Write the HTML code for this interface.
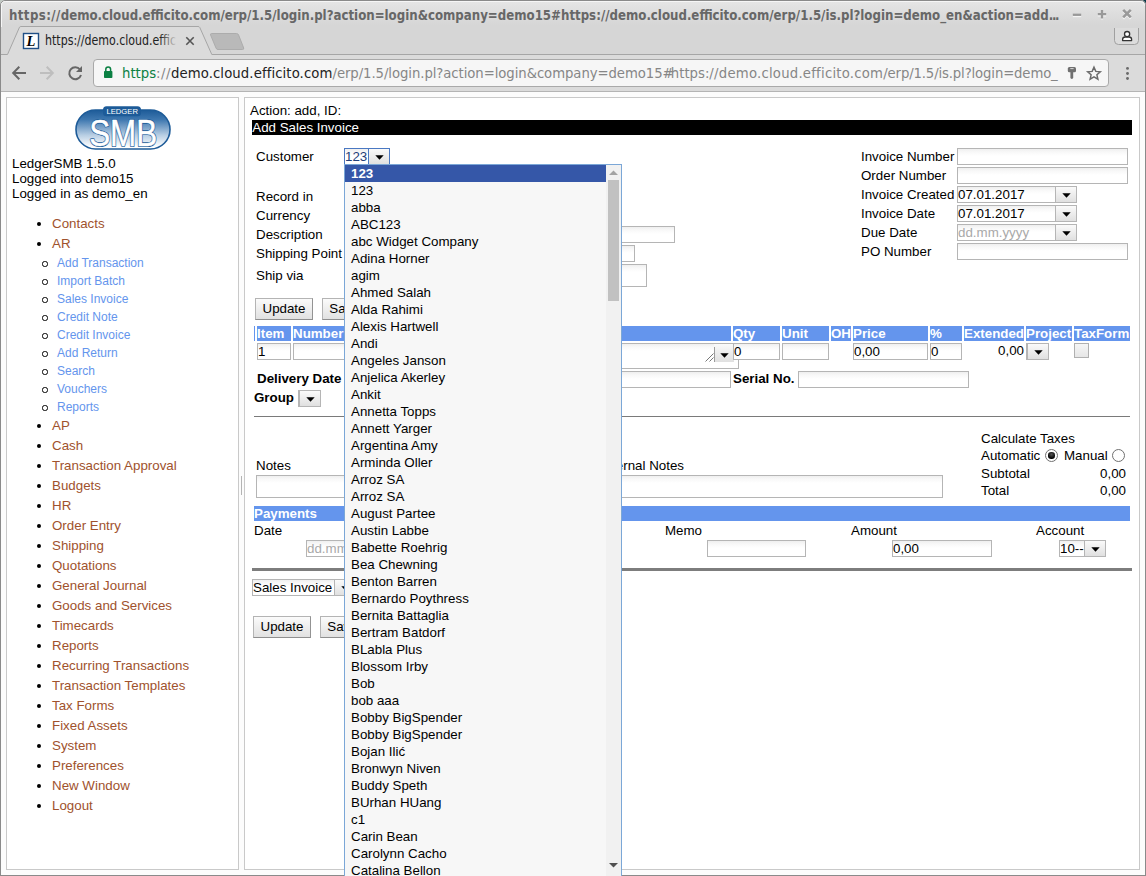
<!DOCTYPE html>
<html>
<head>
<meta charset="utf-8">
<title>LedgerSMB</title>
<style>
html,body{margin:0;padding:0;}
body{width:1146px;height:876px;position:relative;overflow:hidden;background:#fcfcfc;font-family:"Liberation Sans",sans-serif;font-size:13.33px;color:#000;}
.abs{position:absolute;}
#win{position:absolute;left:0;top:0;width:1146px;height:876px;overflow:hidden;}
/* ---------- browser chrome ---------- */
#titlebar{position:absolute;left:0;top:0;width:1146px;height:27px;background:linear-gradient(#e5e5e5 0,#e4e4e4 3px,#d6d6d6 25px);}
#title{position:absolute;left:8.5px;top:6px;transform:scaleX(0.9375);transform-origin:0 0;font-family:"DejaVu Sans Condensed","DejaVu Sans",sans-serif;font-weight:bold;font-size:14px;color:#676767;white-space:nowrap;line-height:18px;}
#tabstrip{position:absolute;left:0;top:27px;width:1146px;height:28px;background:#d6d6d6;}
#toolbar{position:absolute;left:0;top:54px;width:1146px;height:38px;background:#dbdbdb;border-bottom:1px solid #b4b4b4;box-sizing:border-box;}
#urlbox{position:absolute;left:93px;top:59px;width:1016px;height:28px;box-sizing:border-box;border:1px solid #a9a9a9;border-radius:4px;background:#f6f6f6;}
#url{position:absolute;left:122px;top:63px;font-family:"DejaVu Sans Condensed","DejaVu Sans",sans-serif;font-size:14.72px;line-height:20px;white-space:nowrap;color:#868686;}
#url .g{color:#0b8043;}
#url .d{color:#222;}
#tabtext{position:absolute;left:45.3px;top:31.6px;width:143px;transform:scaleX(0.93);transform-origin:0 0;overflow:hidden;font-family:"DejaVu Sans Condensed","DejaVu Sans",sans-serif;font-size:13.2px;line-height:18px;white-space:nowrap;color:#222;}
/* ---------- frames ---------- */
.frame{position:absolute;box-sizing:border-box;border:1px solid #c9c9c9;background:#fff;}
#left{left:6px;top:97px;width:233px;height:773px;}
#right{left:244px;top:97px;width:896px;height:773px;}
.t{position:absolute;white-space:nowrap;line-height:15px;}
.b{font-weight:bold;}

.m1{color:#a0522d;}
.m2{color:#6495ed;}
.inp{position:absolute;box-sizing:border-box;border:1px solid #b5b5b5;background:linear-gradient(#efefef 0,#f8f8f8 3px,#fff 7px);font-size:13.33px;line-height:15px;white-space:nowrap;overflow:hidden;padding-left:0;}
.inp.foc{border-color:#4a78c2;color:#233f7a;}
.inp.foc .sbtn{border-left-color:#4a78c2;}
.sel{overflow:visible;}
.sbtn{position:absolute;right:0;top:0;border-left:1px solid #b5b5b5;background:linear-gradient(#fafafa,#e0e0e0);}
.abs.sbtn{position:absolute;right:auto;}
.btn{position:absolute;box-sizing:border-box;border:1px solid;border-color:#b4b4b4 #939393 #8f8f8f #b4b4b4;border-radius:0;background:linear-gradient(#fbfbfb,#e1e1e1);font-size:13.33px;text-align:center;white-space:nowrap;overflow:hidden;}
.th{position:absolute;height:15px;line-height:15px;background:#6495ed;color:#fff;font-weight:bold;font-size:13.33px;white-space:nowrap;overflow:hidden;}
.radio{position:absolute;width:13px;height:13px;box-sizing:border-box;border:1px solid #707070;border-radius:50%;background:#fff;}
.radio i{position:absolute;left:2.3px;top:2.3px;width:6.4px;height:6.4px;border-radius:50%;background:radial-gradient(circle at 50% 35%,#555,#000 70%);}
#dd{position:absolute;left:344px;top:164px;width:278px;height:720px;box-sizing:border-box;border:1px solid #7ba7d7;background:#f7f7f7;overflow:hidden;font-size:13.33px;}
.opt{height:17px;line-height:17px;padding-left:6px;width:255px;white-space:nowrap;}
.opt.hi{background:#3557a8;color:#fff;font-weight:bold;}
#sbar{position:absolute;left:261px;top:0;width:15px;height:720px;background:#f1f1f1;}
#thumb{position:absolute;left:2px;top:15px;width:11px;height:121px;background:#c1c1c1;}
</style>
</head>
<body>
<div id="win">
<div id="titlebar"></div>
<div id="title"><span style="letter-spacing:0.42px">https://</span>demo.cloud.efficito.com/erp/1.5/login.pl?action=login&amp;company=demo15#https://demo.cloud.efficito.com/erp/1.5/is.pl?login=demo_en&amp;action=add<span style="letter-spacing:-1.4px">...</span></div>
<div id="tabstrip"></div>
<div id="toolbar"></div>
<div id="urlbox"></div>
<svg class="abs" style="left:0;top:0" width="1146" height="92" viewBox="0 0 1146 92">
<!-- active tab -->
<path d="M0 54.5 H7.5 L19.5 27.2 Q20 26.5 21 26.5 H198 Q199.3 26.5 199.8 27.5 L211.8 54.5 H1146 V56 H0 Z" fill="#dbdbdb" stroke="none"/>
<path d="M0 54.5 H7.5 L19.5 27.2 Q20 26.5 21 26.5 H198 Q199.3 26.5 199.8 27.5 L211.8 54.5 H1146" fill="none" stroke="#a6a6a6" stroke-width="1"/>
<!-- new tab button -->
<path d="M211.5 33.5 H236.5 Q238 33.5 238.6 35 L243.7 48 Q244 49.5 242.5 49.5 H218 Q216.6 49.5 216 48 L210.6 35 Q210.2 33.5 211.5 33.5 Z" fill="#b9b9b9" stroke="#acacac" stroke-width="1"/>
<!-- tab close -->
<path d="M186.3 37.3 L193.7 44.7 M193.7 37.3 L186.3 44.7" stroke="#555" stroke-width="1.6" fill="none"/>
<!-- favicon -->
<rect x="23.5" y="33.5" width="15" height="15" fill="#fff" stroke="#1f4f86" stroke-width="1.4"/>
<!-- window controls -->
<g fill="none" stroke="#f4f4f4" stroke-width="2.3" transform="translate(0,1.2)">
<path d="M1072.8 14.8 H1081.2"/><path d="M1097.8 14.2 H1106.2 M1102 10 V18.4"/><path d="M1123.2 9.8 L1130.8 17.4 M1130.8 9.8 L1123.2 17.4"/></g>
<g fill="none" stroke="#999" stroke-width="2.3">
<path d="M1072.8 14.8 H1081.2"/><path d="M1097.8 14.2 H1106.2 M1102 10 V18.4"/><path d="M1123.2 9.8 L1130.8 17.4 M1130.8 9.8 L1123.2 17.4" stroke-width="2.6"/></g>
<!-- user button -->
<path d="M1114.5 28 V40.5 Q1114.5 44.5 1118.5 44.5 H1134.5 Q1138.5 44.5 1138.5 40.5 V28" fill="#dcdcdc" stroke="#a0a0a0" stroke-width="1"/>
<path d="M1122.6 40.6 V39.6 Q1122.6 37 1125.2 37 H1129 Q1131.6 37 1131.6 39.6 V40.6 Z" fill="#fff" stroke="#333" stroke-width="1.3" stroke-linejoin="round"/>
<circle cx="1127.1" cy="34.1" r="2.6" fill="#fff" stroke="#333" stroke-width="1.3"/>
<!-- nav: back -->
<path d="M26 73 H13.5 M19.3 66.8 L13.2 73 L19.3 79.2" fill="none" stroke="#666" stroke-width="2"/>
<!-- nav: forward -->
<path d="M40 73 H52.5 M46.7 66.8 L52.8 73 L46.7 79.2" fill="none" stroke="#bebebe" stroke-width="2"/>
<!-- reload -->
<path d="M80 69.5 A6 6 0 1 0 81 75" fill="none" stroke="#666" stroke-width="2"/>
<path d="M82 66 V72 H76 Z" fill="#666"/>
<!-- lock -->
<rect x="104" y="71" width="8.4" height="7" rx="0.8" fill="#0b8043"/>
<path d="M105.8 71.5 V69.3 A2.4 2.4 0 0 1 110.6 69.3 V71.5" fill="none" stroke="#0b8043" stroke-width="1.5"/>
<!-- key -->
<rect x="1067.8" y="67" width="8.2" height="5.3" rx="1.5" fill="#707070"/>
<path d="M1070.3 68.6 H1073.6" stroke="#e4e4e4" stroke-width="0.9" fill="none"/>
<path d="M1070.4 72 H1073.2 V77.6 Q1073.2 78.9 1071.8 78.9 Q1070.4 78.9 1070.4 77.6 Z" fill="#707070"/>
<!-- star -->
<path d="M1094 67.2 L1095.8 71.4 L1100.3 71.8 L1096.9 74.8 L1097.9 79.2 L1094 76.9 L1090.1 79.2 L1091.1 74.8 L1087.7 71.8 L1092.2 71.4 Z" fill="none" stroke="#6a6a6a" stroke-width="1.5" stroke-linejoin="miter"/>
<!-- menu -->
<circle cx="1127.5" cy="68.4" r="1.45" fill="#6a6a6a"/><circle cx="1127.5" cy="73.45" r="1.45" fill="#6a6a6a"/><circle cx="1127.5" cy="78.5" r="1.45" fill="#6a6a6a"/>
<text x="31" y="46.3" text-anchor="middle" font-family="Liberation Serif,serif" font-style="italic" font-weight="bold" font-size="14.5" fill="#000">L</text>
</svg>
<div id="tabtext">https://demo.cloud.effic</div>
<div class="abs" style="left:160px;top:30px;width:19px;height:20px;background:linear-gradient(to right,rgba(219,219,219,0),#dbdbdb 90%);"></div>
<div id="url"><span class="g">https</span><span style="letter-spacing:0.5px">://</span><span class="d" style="letter-spacing:0.1px">demo.cloud.efficito.com</span><span style="letter-spacing:-0.066px">/erp/1.5/login.pl?action=login&amp;company=demo15</span><span style="letter-spacing:-2.8px">#</span>https:<span style="letter-spacing:0.23px">//demo.cloud.efficito.com</span><span style="letter-spacing:-0.135px">/erp/1.5/is.pl?login=demo_</span></div>

<div class="frame" id="left"></div>
<div class="frame" id="right"></div>

<!--LEFTCONTENT-->
<svg class="abs" style="left:70px;top:102px" width="108" height="54" viewBox="70 102 108 54">
<defs><linearGradient id="lg" x1="0" y1="0" x2="0" y2="1"><stop offset="0" stop-color="#1d5b98"/><stop offset="0.25" stop-color="#3f78b0"/><stop offset="0.65" stop-color="#b9cfe4"/><stop offset="0.95" stop-color="#ffffff"/></linearGradient></defs>
<rect x="76" y="110" width="94" height="39" rx="19.5" fill="url(#lg)" stroke="#1d5b98" stroke-width="1.6"/>
<rect x="103" y="106.3" width="38" height="10" rx="3.5" fill="#1d5b98"/>
<text x="122.2" y="114.1" text-anchor="middle" font-family="Liberation Sans,sans-serif" font-size="7.8" fill="#fff" textLength="31.5" lengthAdjust="spacingAndGlyphs">LEDGER</text>
<text x="123.2" y="145.6" text-anchor="middle" font-family="Liberation Sans,sans-serif" font-size="37" fill="#1d5b98" stroke="#1d5b98" stroke-width="2.0" stroke-linejoin="round" textLength="68" lengthAdjust="spacingAndGlyphs">SMB</text>
<text x="123.2" y="145.6" text-anchor="middle" font-family="Liberation Sans,sans-serif" font-size="37" fill="#fff" stroke="#fff" stroke-width="0.5" stroke-linejoin="round" textLength="68" lengthAdjust="spacingAndGlyphs">SMB</text>
</svg>
<div class="t" style="left:12px;top:156px;">LedgerSMB 1.5.0</div>
<div class="t" style="left:12px;top:171px;">Logged into demo15</div>
<div class="t" style="left:12px;top:186px;">Logged in as demo_en</div>
<div class="abs" style="left:36.8px;top:221.8px;width:4.4px;height:4.4px;border-radius:50%;background:#000;"></div>
<div class="t m1" style="left:52px;top:216px;">Contacts</div>
<div class="abs" style="left:36.8px;top:241.8px;width:4.4px;height:4.4px;border-radius:50%;background:#000;"></div>
<div class="t m1" style="left:52px;top:236px;">AR</div>
<div class="abs" style="left:42.4px;top:261.4px;width:5.2px;height:5.2px;border-radius:50%;border:1.1px solid #000;box-sizing:border-box;"></div>
<div class="t m2" style="left:57px;top:256px;font-size:12px;">Add Transaction</div>
<div class="abs" style="left:42.4px;top:279.4px;width:5.2px;height:5.2px;border-radius:50%;border:1.1px solid #000;box-sizing:border-box;"></div>
<div class="t m2" style="left:57px;top:274px;font-size:12px;">Import Batch</div>
<div class="abs" style="left:42.4px;top:297.4px;width:5.2px;height:5.2px;border-radius:50%;border:1.1px solid #000;box-sizing:border-box;"></div>
<div class="t m2" style="left:57px;top:292px;font-size:12px;">Sales Invoice</div>
<div class="abs" style="left:42.4px;top:315.4px;width:5.2px;height:5.2px;border-radius:50%;border:1.1px solid #000;box-sizing:border-box;"></div>
<div class="t m2" style="left:57px;top:310px;font-size:12px;">Credit Note</div>
<div class="abs" style="left:42.4px;top:333.4px;width:5.2px;height:5.2px;border-radius:50%;border:1.1px solid #000;box-sizing:border-box;"></div>
<div class="t m2" style="left:57px;top:328px;font-size:12px;">Credit Invoice</div>
<div class="abs" style="left:42.4px;top:351.4px;width:5.2px;height:5.2px;border-radius:50%;border:1.1px solid #000;box-sizing:border-box;"></div>
<div class="t m2" style="left:57px;top:346px;font-size:12px;">Add Return</div>
<div class="abs" style="left:42.4px;top:369.4px;width:5.2px;height:5.2px;border-radius:50%;border:1.1px solid #000;box-sizing:border-box;"></div>
<div class="t m2" style="left:57px;top:364px;font-size:12px;">Search</div>
<div class="abs" style="left:42.4px;top:387.4px;width:5.2px;height:5.2px;border-radius:50%;border:1.1px solid #000;box-sizing:border-box;"></div>
<div class="t m2" style="left:57px;top:382px;font-size:12px;">Vouchers</div>
<div class="abs" style="left:42.4px;top:405.4px;width:5.2px;height:5.2px;border-radius:50%;border:1.1px solid #000;box-sizing:border-box;"></div>
<div class="t m2" style="left:57px;top:400px;font-size:12px;">Reports</div>
<div class="abs" style="left:36.8px;top:423.8px;width:4.4px;height:4.4px;border-radius:50%;background:#000;"></div>
<div class="t m1" style="left:52px;top:418px;">AP</div>
<div class="abs" style="left:36.8px;top:443.8px;width:4.4px;height:4.4px;border-radius:50%;background:#000;"></div>
<div class="t m1" style="left:52px;top:438px;">Cash</div>
<div class="abs" style="left:36.8px;top:463.8px;width:4.4px;height:4.4px;border-radius:50%;background:#000;"></div>
<div class="t m1" style="left:52px;top:458px;">Transaction Approval</div>
<div class="abs" style="left:36.8px;top:483.8px;width:4.4px;height:4.4px;border-radius:50%;background:#000;"></div>
<div class="t m1" style="left:52px;top:478px;">Budgets</div>
<div class="abs" style="left:36.8px;top:503.8px;width:4.4px;height:4.4px;border-radius:50%;background:#000;"></div>
<div class="t m1" style="left:52px;top:498px;">HR</div>
<div class="abs" style="left:36.8px;top:523.8px;width:4.4px;height:4.4px;border-radius:50%;background:#000;"></div>
<div class="t m1" style="left:52px;top:518px;">Order Entry</div>
<div class="abs" style="left:36.8px;top:543.8px;width:4.4px;height:4.4px;border-radius:50%;background:#000;"></div>
<div class="t m1" style="left:52px;top:538px;">Shipping</div>
<div class="abs" style="left:36.8px;top:563.8px;width:4.4px;height:4.4px;border-radius:50%;background:#000;"></div>
<div class="t m1" style="left:52px;top:558px;">Quotations</div>
<div class="abs" style="left:36.8px;top:583.8px;width:4.4px;height:4.4px;border-radius:50%;background:#000;"></div>
<div class="t m1" style="left:52px;top:578px;">General Journal</div>
<div class="abs" style="left:36.8px;top:603.8px;width:4.4px;height:4.4px;border-radius:50%;background:#000;"></div>
<div class="t m1" style="left:52px;top:598px;">Goods and Services</div>
<div class="abs" style="left:36.8px;top:623.8px;width:4.4px;height:4.4px;border-radius:50%;background:#000;"></div>
<div class="t m1" style="left:52px;top:618px;">Timecards</div>
<div class="abs" style="left:36.8px;top:643.8px;width:4.4px;height:4.4px;border-radius:50%;background:#000;"></div>
<div class="t m1" style="left:52px;top:638px;">Reports</div>
<div class="abs" style="left:36.8px;top:663.8px;width:4.4px;height:4.4px;border-radius:50%;background:#000;"></div>
<div class="t m1" style="left:52px;top:658px;">Recurring Transactions</div>
<div class="abs" style="left:36.8px;top:683.8px;width:4.4px;height:4.4px;border-radius:50%;background:#000;"></div>
<div class="t m1" style="left:52px;top:678px;">Transaction Templates</div>
<div class="abs" style="left:36.8px;top:703.8px;width:4.4px;height:4.4px;border-radius:50%;background:#000;"></div>
<div class="t m1" style="left:52px;top:698px;">Tax Forms</div>
<div class="abs" style="left:36.8px;top:723.8px;width:4.4px;height:4.4px;border-radius:50%;background:#000;"></div>
<div class="t m1" style="left:52px;top:718px;">Fixed Assets</div>
<div class="abs" style="left:36.8px;top:743.8px;width:4.4px;height:4.4px;border-radius:50%;background:#000;"></div>
<div class="t m1" style="left:52px;top:738px;">System</div>
<div class="abs" style="left:36.8px;top:763.8px;width:4.4px;height:4.4px;border-radius:50%;background:#000;"></div>
<div class="t m1" style="left:52px;top:758px;">Preferences</div>
<div class="abs" style="left:36.8px;top:783.8px;width:4.4px;height:4.4px;border-radius:50%;background:#000;"></div>
<div class="t m1" style="left:52px;top:778px;">New Window</div>
<div class="abs" style="left:36.8px;top:803.8px;width:4.4px;height:4.4px;border-radius:50%;background:#000;"></div>
<div class="t m1" style="left:52px;top:798px;">Logout</div>
<div class="abs" style="left:241px;top:476px;width:1px;height:19px;background:#b4b4b4;"></div>
<!--/LEFTCONTENT-->
<!--RIGHTCONTENT-->
<div class="t" style="left:250px;top:103px;">Action: add, ID:</div>
<div class="abs" style="left:252px;top:120px;width:880px;height:15px;background:#000;"></div>
<div class="t" style="left:252.3px;top:120px;color:#fff;">Add Sales Invoice</div>
<div class="t" style="left:256px;top:149px;">Customer</div>
<div class="t" style="left:256px;top:189px;">Record in</div>
<div class="t" style="left:256px;top:208px;">Currency</div>
<div class="t" style="left:256px;top:227px;">Description</div>
<div class="t" style="left:256px;top:246px;">Shipping Point</div>
<div class="t" style="left:256px;top:268px;">Ship via</div>
<div class="inp sel foc" style="left:344px;top:148px;width:46px;height:17px;"><span>123</span><div class="sbtn" style="width:20px;height:15px;"></div></div><svg class="abs" style="left:374.5px;top:154.5px" width="9" height="5" viewBox="0 0 9 5"><path d="M0.3 0.3 H8.7 L4.5 4.8 Z" fill="#000"/></svg>
<div class="inp" style="left:344px;top:226px;width:331px;height:17px;"></div>
<div class="inp" style="left:344px;top:245px;width:291px;height:17px;"></div>
<div class="inp" style="left:344px;top:264px;width:303px;height:23px;"></div>
<div class="t" style="left:861px;top:149px;">Invoice Number</div>
<div class="t" style="left:861px;top:168px;">Order Number</div>
<div class="t" style="left:861px;top:187px;">Invoice Created</div>
<div class="t" style="left:861px;top:206px;">Invoice Date</div>
<div class="t" style="left:861px;top:225px;">Due Date</div>
<div class="t" style="left:861px;top:244px;">PO Number</div>
<div class="inp" style="left:957px;top:148px;width:171px;height:17px;"></div>
<div class="inp" style="left:957px;top:167px;width:171px;height:17px;"></div>
<div class="inp sel" style="left:957px;top:186px;width:120px;height:17px;"><span>07.01.2017</span><div class="sbtn" style="width:20px;height:15px;"></div></div><svg class="abs" style="left:1061.5px;top:192.5px" width="9" height="5" viewBox="0 0 9 5"><path d="M0.3 0.3 H8.7 L4.5 4.8 Z" fill="#000"/></svg>
<div class="inp sel" style="left:957px;top:205px;width:120px;height:17px;"><span>07.01.2017</span><div class="sbtn" style="width:20px;height:15px;"></div></div><svg class="abs" style="left:1061.5px;top:211.5px" width="9" height="5" viewBox="0 0 9 5"><path d="M0.3 0.3 H8.7 L4.5 4.8 Z" fill="#000"/></svg>
<div class="inp sel" style="left:957px;top:224px;width:120px;height:17px;"><span style="color:#a9a9a9">dd.mm.yyyy</span><div class="sbtn" style="width:20px;height:15px;"></div></div><svg class="abs" style="left:1061.5px;top:230.5px" width="9" height="5" viewBox="0 0 9 5"><path d="M0.3 0.3 H8.7 L4.5 4.8 Z" fill="#000"/></svg>
<div class="inp" style="left:957px;top:243px;width:171px;height:17px;"></div>
<div class="btn" style="left:255px;top:298px;width:58px;height:22px;line-height:20px;">Update</div>
<div class="btn" style="left:322px;top:298px;width:45px;height:22px;line-height:20px;">Save</div>
<div class="th" style="left:254px;top:326px;width:1px;"></div>
<div class="th" style="left:257px;top:326px;width:34px;">Item</div>
<div class="th" style="left:293px;top:326px;width:438px;">Number</div>
<div class="th" style="left:733px;top:326px;width:47px;">Qty</div>
<div class="th" style="left:782px;top:326px;width:47px;">Unit</div>
<div class="th" style="left:831px;top:326px;width:20px;">OH</div>
<div class="th" style="left:853px;top:326px;width:75px;">Price</div>
<div class="th" style="left:930px;top:326px;width:32px;">%</div>
<div class="th" style="left:964px;top:326px;width:60px;">Extended</div>
<div class="th" style="left:1026px;top:326px;width:46px;">Project</div>
<div class="th" style="left:1074px;top:326px;width:56px;">TaxForm</div>
<div class="inp" style="left:257px;top:343px;width:34px;height:17px;"><span style="">1</span></div>
<div class="inp" style="left:293px;top:343px;width:60px;height:17px;"></div>
<div class="inp" style="left:400px;top:343px;width:339px;height:26px;"></div>
<div class="sbtn abs" style="left:714px;top:344px;width:20px;height:18px;border-left:0;"></div><div class="abs" style="left:714px;top:347px;width:1px;height:15px;background:#9c9c9c;"></div>
<svg class="abs" style="left:720.0px;top:352.5px" width="9" height="5" viewBox="0 0 9 5"><path d="M0.3 0.3 H8.7 L4.5 4.8 Z" fill="#000"/></svg>
<svg class="abs" style="left:705px;top:353px" width="9" height="9" viewBox="0 0 9 9"><path d="M0.5 8.5 L8.5 0.5 M4.5 8.5 L8.5 4.5" stroke="#777" stroke-width="1" fill="none"/></svg>
<div class="inp" style="left:733px;top:343px;width:47px;height:17px;"><span style="">0</span></div>
<div class="inp" style="left:782px;top:343px;width:47px;height:17px;"></div>
<div class="inp" style="left:853px;top:343px;width:75px;height:17px;"><span style="">0,00</span></div>
<div class="inp" style="left:930px;top:343px;width:32px;height:17px;"><span style="">0</span></div>
<div class="t" style="right:122px;top:343px;">0,00</div>
<div class="inp sel" style="left:1026px;top:343px;width:23px;height:17px;"><div class="sbtn" style="width:20px;height:15px;"></div></div><svg class="abs" style="left:1033.5px;top:349.5px" width="9" height="5" viewBox="0 0 9 5"><path d="M0.3 0.3 H8.7 L4.5 4.8 Z" fill="#000"/></svg>
<div class="abs" style="left:1074px;top:343px;width:15px;height:15px;box-sizing:border-box;border:1px solid #b0b0b0;background:linear-gradient(#f6f6f6,#e6e6e6);"></div>
<div class="t b" style="left:257px;top:371px;">Delivery Date</div>
<div class="inp" style="left:344px;top:371px;width:387px;height:17px;"></div>
<div class="t b" style="left:733px;top:371px;">Serial No.</div>
<div class="inp" style="left:798px;top:371px;width:171px;height:17px;"></div>
<div class="t b" style="left:254px;top:390px;">Group</div>
<div class="inp sel" style="left:298px;top:390px;width:23px;height:17px;"><div class="sbtn" style="width:20px;height:15px;"></div></div><svg class="abs" style="left:305.5px;top:396.5px" width="9" height="5" viewBox="0 0 9 5"><path d="M0.3 0.3 H8.7 L4.5 4.8 Z" fill="#000"/></svg>
<div class="abs" style="left:254px;top:416px;width:876px;height:1px;background:#7a7a7a;"></div>
<div class="t" style="left:256px;top:458px;">Notes</div>
<div class="inp" style="left:256px;top:475px;width:340px;height:23px;"></div>
<div class="t" style="left:601px;top:458px;">Internal Notes</div>
<div class="inp" style="left:603px;top:475px;width:340px;height:23px;"></div>
<div class="t" style="left:981px;top:431px;">Calculate Taxes</div>
<div class="t" style="left:981px;top:448px;">Automatic</div>
<div class="t" style="left:1064px;top:448px;">Manual</div>
<div class="radio" style="left:1045px;top:449px;"><i></i></div>
<div class="radio" style="left:1112px;top:449px;"></div>
<div class="t" style="left:981px;top:466px;">Subtotal</div>
<div class="t" style="right:20px;top:466px;">0,00</div>
<div class="t" style="left:981px;top:483px;">Total</div>
<div class="t" style="right:20px;top:483px;">0,00</div>
<div class="th" style="left:254px;top:506px;width:876px;">Payments</div>
<div class="t" style="left:254px;top:523px;">Date</div>
<div class="inp" style="left:306px;top:540px;width:120px;height:17px;"><span style="color:#a9a9a9;">dd.mm.yyyy</span></div>
<div class="t" style="left:665px;top:523px;">Memo</div>
<div class="inp" style="left:707px;top:540px;width:99px;height:17px;"></div>
<div class="t" style="left:851px;top:523px;">Amount</div>
<div class="inp" style="left:892px;top:540px;width:100px;height:17px;"><span style="">0,00</span></div>
<div class="t" style="left:1036px;top:523px;">Account</div>
<div class="inp sel" style="left:1059px;top:540px;width:47px;height:17px;"><span>10--</span><div class="sbtn" style="width:20px;height:15px;"></div></div><svg class="abs" style="left:1090.5px;top:546.5px" width="9" height="5" viewBox="0 0 9 5"><path d="M0.3 0.3 H8.7 L4.5 4.8 Z" fill="#000"/></svg>
<div class="abs" style="left:252px;top:568px;width:880px;height:3px;background:#7d7d7d;"></div>
<div class="inp sel" style="left:252px;top:579px;width:104px;height:17px;"><span>Sales Invoice</span><div class="sbtn" style="width:20px;height:15px;"></div></div><svg class="abs" style="left:340.5px;top:585.5px" width="9" height="5" viewBox="0 0 9 5"><path d="M0.3 0.3 H8.7 L4.5 4.8 Z" fill="#000"/></svg>
<div class="btn" style="left:253px;top:616px;width:58px;height:22px;line-height:20px;">Update</div>
<div class="btn" style="left:320px;top:616px;width:45px;height:22px;line-height:20px;">Save</div>
<!--/RIGHTCONTENT-->
<!--WINBORDER-->
<svg class="abs" style="left:0;top:0" width="1146" height="876" viewBox="0 0 1146 876">
<path d="M0 0 H5 A5 5 0 0 0 0 5 Z" fill="#c2cac4"/>
<path d="M1146 0 H1141 A5 5 0 0 1 1146 5 Z" fill="#0c3a48"/>
<path d="M0.5 876 V5 A4.5 4.5 0 0 1 5 0.5 H1141 A4.5 4.5 0 0 1 1145.5 5 V876" fill="none" stroke="#8a8a8a" stroke-width="1"/>
<path d="M1.5 27 V5.5 A4 4 0 0 1 5.5 1.5 H1140.5 A4 4 0 0 1 1144.5 5.5" fill="none" stroke="#f6f6f6" stroke-width="1"/>
<path d="M0 875.5 H1146" fill="none" stroke="#8a8a8a" stroke-width="1"/>
</svg>
<!--/WINBORDER-->
<!--DROPDOWN-->
<div id="dd">
<div class="opt hi">123</div>
<div class="opt">123</div>
<div class="opt">abba</div>
<div class="opt">ABC123</div>
<div class="opt">abc Widget Company</div>
<div class="opt">Adina Horner</div>
<div class="opt">agim</div>
<div class="opt">Ahmed Salah</div>
<div class="opt">Alda Rahimi</div>
<div class="opt">Alexis Hartwell</div>
<div class="opt">Andi</div>
<div class="opt">Angeles Janson</div>
<div class="opt">Anjelica Akerley</div>
<div class="opt">Ankit</div>
<div class="opt">Annetta Topps</div>
<div class="opt">Annett Yarger</div>
<div class="opt">Argentina Amy</div>
<div class="opt">Arminda Oller</div>
<div class="opt">Arroz SA</div>
<div class="opt">Arroz SA</div>
<div class="opt">August Partee</div>
<div class="opt">Austin Labbe</div>
<div class="opt">Babette Roehrig</div>
<div class="opt">Bea Chewning</div>
<div class="opt">Benton Barren</div>
<div class="opt">Bernardo Poythress</div>
<div class="opt">Bernita Battaglia</div>
<div class="opt">Bertram Batdorf</div>
<div class="opt">BLabla Plus</div>
<div class="opt">Blossom Irby</div>
<div class="opt">Bob</div>
<div class="opt">bob aaa</div>
<div class="opt">Bobby BigSpender</div>
<div class="opt">Bobby BigSpender</div>
<div class="opt">Bojan Ilić</div>
<div class="opt">Bronwyn Niven</div>
<div class="opt">Buddy Speth</div>
<div class="opt">BUrhan HUang</div>
<div class="opt">c1</div>
<div class="opt">Carin Bean</div>
<div class="opt">Carolynn Cacho</div>
<div class="opt">Catalina Bellon</div>
<div id="sbar"><div id="thumb"></div><svg class="abs" style="left:3px;top:5px" width="9" height="5" viewBox="0 0 9 5"><path d="M0 5 L4.5 0.5 L9 5 Z" fill="#a3a3a3"/></svg><svg class="abs" style="left:3px;top:698px" width="9" height="5" viewBox="0 0 9 5"><path d="M0 0 L4.5 4.5 L9 0 Z" fill="#505050"/></svg></div>
</div>
<!--/DROPDOWN-->
</div>
</body>
</html>
